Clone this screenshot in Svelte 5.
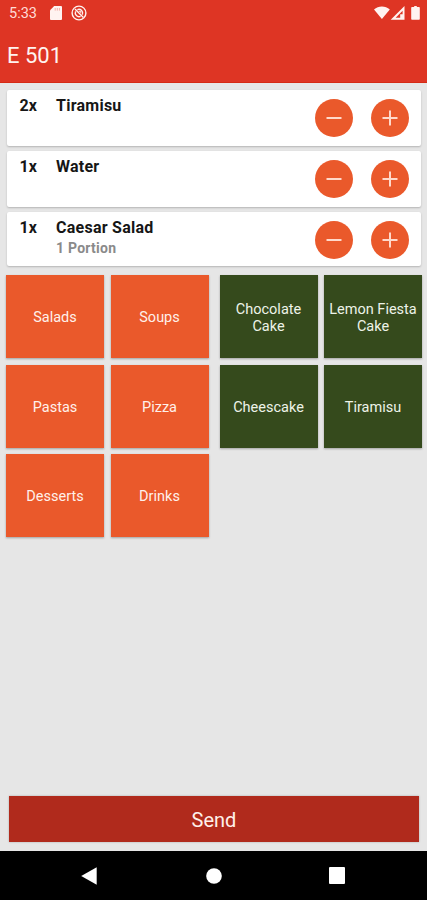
<script lang="ts">
    type OrderItem = { amount: number, name: string, note?: string };

    const table = "E 501";
    const categories = ["Salads", "Soups", "Pastas", "Pizza", "Desserts", "Drinks"];
    const products = ["Chocolate Cake", "Lemon Fiesta Cake", "Cheescake", "Tiramisu"];

    let order: Array<OrderItem> = $state([
        { amount: 2, name: "Tiramisu" },
        { amount: 1, name: "Water" },
        { amount: 1, name: "Caesar Salad", note: "1 Portion" }
    ]);

    function add(index: number): void {
        order[index].amount++;
    }

    function remove(index: number): void {
        order[index].amount--;
        if(order[index].amount <= 0) {
            order.splice(index, 1);
        }
    }

    function addProduct(name: string): void {
        const index = order.findIndex(i => i.name === name);
        if(index === -1) {
            order.push({ amount: 1, name });
        } else {
            add(index);
        }
    }
</script>

<div class="screen">
    <header>
        <div class="status">
            <span class="clock">5:33</span>
            <svg class="sd" width="12" height="14" viewBox="0 0 12 14">
                <path fill="currentColor" d="M4.2 0H11a1 1 0 0 1 1 1v12a1 1 0 0 1-1 1H1a1 1 0 0 1-1-1V4.2z" />
                <path stroke="#de3524" stroke-opacity=".35" stroke-width="1" d="M5.2 2v2.6M7.3 2v2.6M9.4 2v2.6" />
            </svg>
            <svg class="sync" width="16" height="16" viewBox="0 0 16 16" fill="none" stroke="currentColor">
                <circle cx="8" cy="8" r="6.9" stroke-width="1.4" />
                <path stroke-width="1.4" d="M4 4l8.4 8.4M6.4 4.6a3.8 3.8 0 0 1 5 5M4.6 6.4a3.8 3.8 0 0 0 5 5" />
                <path stroke-width="1" d="M7.8 6.2l2 .2v1.8" />
            </svg>
            <span class="spacer"></span>
            <svg width="46" height="14" viewBox="0 0 46 14" fill="currentColor">
                <path d="M0 3.4C4.4-.5 11.4-.5 15.8 3.4L7.9 13z" />
                <path fill-rule="evenodd" d="M30.5 0v13.8H16.7zM28.6 4.8l-7 7h4.6V8.2h2.4z" />
                <path d="M38 1h2.2V0h2.6v1H45a.8.8 0 0 1 .8.8v11.2a.8.8 0 0 1-.8.8h-7a.8.8 0 0 1-.8-.8V1.8A.8.8 0 0 1 38 1z" />
            </svg>
        </div>
        <h1>{table}</h1>
    </header>

    <div class="order">
        {#each order as item, index}
            <div class="item">
                <span class="amount">{item.amount}x</span>
                <div class="name">
                    {item.name}
                    {#if item.note}
                        <small>{item.note}</small>
                    {/if}
                </div>
                <button class="round" aria-label="Remove" onclick={() => remove(index)}>
                    <svg width="16" height="16" viewBox="0 0 16 16"><path d="M.5 8h15" /></svg>
                </button>
                <button class="round" aria-label="Add" onclick={() => add(index)}>
                    <svg width="16" height="16" viewBox="0 0 16 16"><path d="M.5 8h15M8 .5v15" /></svg>
                </button>
            </div>
        {/each}
    </div>

    <div class="menu">
        <div class="tiles">
            {#each categories as category}
                <button class="tile">{category}</button>
            {/each}
        </div>
        <div class="tiles products">
            {#each products as product}
                <button class="tile" onclick={() => addProduct(product)}>{product}</button>
            {/each}
        </div>
    </div>

    <button class="send">Send</button>

    <nav>
        <svg width="16" height="18" viewBox="0 0 16 18"><path d="M15.7.3v17.4L.2 9z" /></svg>
        <svg class="home" width="16" height="16" viewBox="0 0 16 16"><circle cx="8" cy="8" r="7.8" /></svg>
        <svg width="16" height="17" viewBox="0 0 16 17"><rect width="16" height="17" rx="1" /></svg>
    </nav>
</div>

<style>
:global(body) {
    margin: 0;
}

.screen {
    display: flex;
    flex-direction: column;
    width: 427px;
    height: 900px;
    overflow: hidden;
    background-color: #e6e6e6;
    font-family: Roboto, sans-serif;
}

button {
    border: none;
    padding: 0;
    font-family: inherit;
    color: #fff0ea;
    cursor: pointer;
}

svg {
    display: block;
    flex: none;
}

header {
    height: 83px;
    background-color: #de3524;
    color: #fff3f0;
    box-sizing: border-box;
    border-bottom: 1px solid #d52a14;
    flex: none;
}

.status {
    display: flex;
    align-items: center;
    height: 26px;
    padding: 0 7px 0 9px;
}

.clock {
    width: 41px;
    padding-top: 1px;
    font-size: 14.5px;
    color: #ffdcd5;
}

.sync {
    margin-left: 9px;
}

.spacer {
    flex: 1;
}

h1 {
    margin: 16px 0 0 7px;
    font-size: 22px;
    line-height: 28px;
    font-weight: 400;
}

.order {
    display: flex;
    flex-direction: column;
    gap: 5px;
    padding: 7px 6px 0 7px;
}

.item {
    display: flex;
    height: 56px;
    padding: 0 12px 0 12.5px;
    box-sizing: border-box;
    border-radius: 2px;
    background-color: #fff;
    box-shadow: 0 1px 2px rgba(0, 0, 0, 0.22);
    color: #161616;
    font-size: 16px;
    font-weight: 700;
    line-height: 20px;
    letter-spacing: 0.25px;
}

.item:last-child {
    height: 54px;
}

.amount {
    width: 36.5px;
    padding-top: 6px;
    letter-spacing: 0;
}

.name {
    flex: 1;
    padding-top: 6px;
}

small {
    display: block;
    font-size: 14px;
    color: #8a8a8a;
}

.round {
    display: flex;
    align-items: center;
    justify-content: center;
    width: 38px;
    height: 38px;
    margin: 9px 0 0 18px;
    border-radius: 50%;
    background-color: #ea592b;
}

.round path {
    stroke: #ffd9cb;
    stroke-width: 2;
}

.menu {
    display: flex;
    align-items: flex-start;
    gap: 11px;
    flex: 1;
    padding: 9px 5px 0 6px;
}

.tiles {
    display: grid;
    grid-template-columns: 98px 98px;
    grid-auto-rows: 83px;
    gap: 6.5px;
}

.tile {
    padding-top: 2px;
    background-color: #ea592b;
    box-shadow: 0 1px 2px rgba(0, 0, 0, 0.3);
    font-size: 14.5px;
    line-height: 17px;
}

.products .tile {
    background-color: #354a1c;
    color: #edf3e8;
}

.send {
    height: 46px;
    margin: 0 8px 9px 9px;
    padding-top: 2px;
    flex: none;
    background-color: #b02a1c;
    box-shadow: 0 0 2px rgba(0, 0, 0, 0.25);
    font-size: 20px;
}

nav {
    display: flex;
    align-items: center;
    justify-content: space-between;
    height: 49px;
    padding: 0 82px 0 81px;
    box-sizing: border-box;
    background-color: #000;
    fill: #fff;
    flex: none;
}

.home {
    margin-left: 2px;
}
</style>
